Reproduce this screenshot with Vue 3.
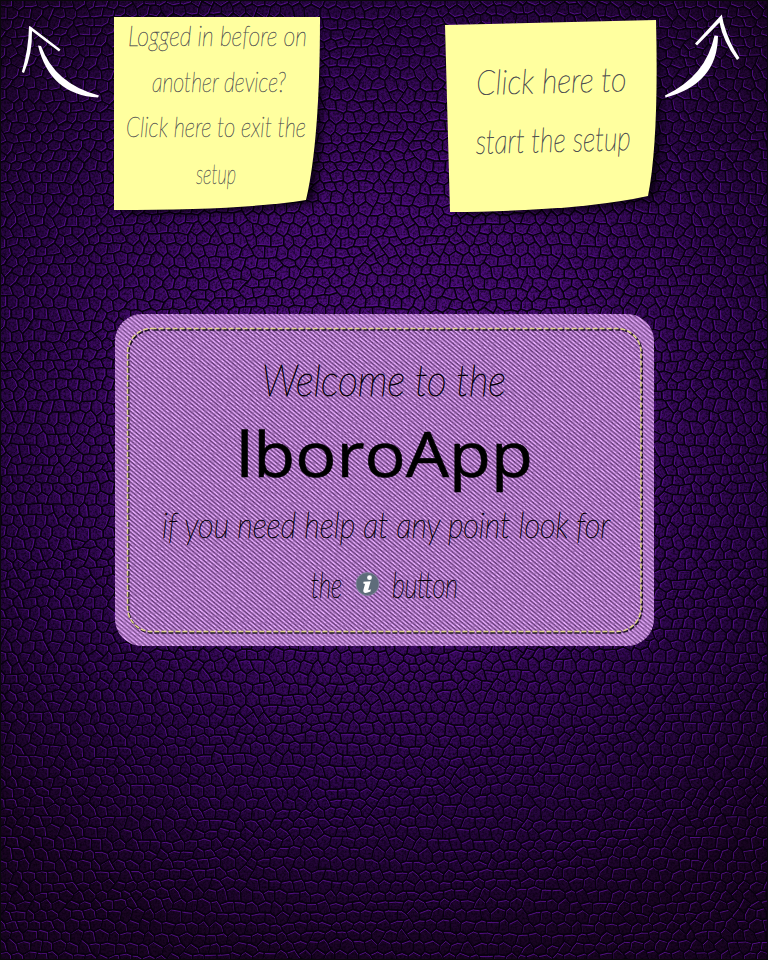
<script setup>
// Leather grain: a honeycomb whose shared corners are randomly displaced.
const W = 768
const H = 960
const hash = (a, b) => {
  const s = Math.sin(a * 127.1 + b * 311.7) * 43758.5453
  return s - Math.floor(s)
}
const cw = 12
const ch = 10.4
const corner = (i, j) => {
  const zig = (i + j) % 2 ? 1.5 : -1.5
  return [
    (i * cw) / 2 + (hash(i, j) - 0.5) * 4.4 - 6,
    j * ch + zig + (hash(i + 91, j + 37) - 0.5) * 4 + Math.sin(i * 0.11 + j * 0.6) * 2 - 4
  ]
}
const shift = ([x, y]) => {
  const dx = x - 384
  const dy = y - 420
  const d = Math.hypot(dx, dy) || 1
  return [x + (dx / d) * 1.6, y + (dy / d) * 1.6]
}
const f = ([x, y]) => x.toFixed(1) + ' ' + y.toFixed(1)
let seams = ''
let ridges = ''
for (let j = 0; j * ch < H + 20; j++) {
  for (let i = 0; (i * cw) / 2 < W + 20; i++) {
    const a = corner(i, j)
    const ends = [corner(i + 1, j)]
    if ((i + j) % 2) ends.push(corner(i, j + 1))
    for (const b of ends) {
      seams += 'M' + f(a) + 'L' + f(b)
      ridges += 'M' + f(shift(a)) + 'L' + f(shift(b))
    }
  }
}
</script>

<template>
  <div class="page">
    <svg class="leather" viewBox="0 0 768 960" aria-hidden="true">
      <defs>
        <radialGradient id="glow" gradientUnits="userSpaceOnUse" cx="384" cy="400" r="570">
          <stop offset="0" stop-color="#500e80" />
          <stop offset="0.35" stop-color="#460b72" />
          <stop offset="0.7" stop-color="#2b0648" />
          <stop offset="1" stop-color="#190422" />
        </radialGradient>
        <filter id="grain" x="0" y="0" width="100%" height="100%" color-interpolation-filters="sRGB">
          <feTurbulence type="fractalNoise" baseFrequency="0.45" numOctaves="2" seed="4" />
          <feColorMatrix values="0 0 0 0 0.02  0 0 0 0 0  0 0 0 0 0.04  1.6 0 0 0 -0.6" />
        </filter>
      </defs>
      <rect width="768" height="960" fill="url(#glow)" />
      <rect width="768" height="960" filter="url(#grain)" />
      <path :d="ridges" class="ridge" />
      <path :d="seams" class="seam" />
    </svg>

    <header class="top">
      <svg class="arrow-left" viewBox="0 0 110 230" aria-hidden="true">
        <path d="M29 26 L30.500 26.500 L60.500 49.500 L59 51.500 L32 31 Q32.500 54 24 73 L21.800 72 Q28.500 50 29 26Z" />
        <path d="M38 45.500 L41 46 Q55 84 99 95.500 L98 97.500 Q50 95 38 45.500Z" />
      </svg>

      <a class="note">
        <svg viewBox="110 0 220 230">
          <path class="shade" d="M122 30 H318 Q326 150 313 203 Q250 214 122 213Z" />
          <path class="paper" d="M114 17 H320 Q320 140 306 200 Q245 210 114 210Z" />
          <g class="ink small">
            <text x="128" y="46" textLength="179" lengthAdjust="spacingAndGlyphs">Logged in before on</text>
            <text x="152" y="92" textLength="134" lengthAdjust="spacingAndGlyphs">another device?</text>
            <text x="126" y="137" textLength="180" lengthAdjust="spacingAndGlyphs">Click here to exit the</text>
            <text x="196" y="184" textLength="40" lengthAdjust="spacingAndGlyphs">setup</text>
          </g>
        </svg>
      </a>

      <a class="note">
        <svg viewBox="440 0 220 230">
          <path class="shade" d="M456 32 L655 30 Q667 140 654 199 Q585 215 458 215Z" />
          <path class="paper" d="M445 25 L656 20 Q659 140 648 196 Q580 211 450 212Z" />
          <g class="ink large" transform="rotate(-1.400 550 110)">
            <text x="477" y="93" textLength="150" lengthAdjust="spacingAndGlyphs">Click here to</text>
            <text x="475" y="152" textLength="155" lengthAdjust="spacingAndGlyphs">start the setup</text>
          </g>
        </svg>
      </a>

      <svg class="arrow-right" viewBox="660 0 108 230" aria-hidden="true">
        <path d="M721.800 14.500 L723.500 23 Q729 43 739.500 58 L737 60 Q723 41 719.500 22.500 L697 45.500 L695 43.500Z" />
        <path d="M714.500 35.500 L718 36 Q717.500 84 665.500 97.500 L665 95.500 Q706 76 714.500 35.500Z" />
      </svg>
    </header>

    <main class="welcome">
      <svg viewBox="114 314 540 332">
        <defs>
          <pattern id="denim" width="3.200" height="3.200" patternUnits="userSpaceOnUse" patternTransform="rotate(40)">
            <rect width="3.200" height="3.200" fill="#e2a6f8" />
            <rect width="3.200" height="1.500" fill="#683c7c" />
          </pattern>
          <filter id="fibre" x="0" y="0" width="100%" height="100%" color-interpolation-filters="sRGB">
            <feTurbulence type="fractalNoise" baseFrequency="0.25 0.4" numOctaves="3" seed="8" />
            <feColorMatrix values="0 0 0 0 0.6  0 0 0 0 0.4  0 0 0 0 0.68  1.6 0 0 0 -0.6" />
          </filter>
          <clipPath id="patch"><rect x="115" y="314" width="539" height="332" rx="27" /></clipPath>
        </defs>
        <g clip-path="url(#patch)">
          <rect x="115" y="314" width="539" height="332" fill="url(#denim)" />
          <rect x="115" y="314" width="539" height="332" filter="url(#fibre)" />
          <rect class="rim" x="121" y="321" width="527" height="318" rx="24" />
        </g>
        <rect class="stitch-hole" x="128.500" y="329.700" width="513.500" height="303" rx="24" />
        <rect class="stitch" x="127.500" y="328.500" width="513.500" height="303" rx="24" />

        <text class="script hello" x="262" y="396" textLength="244" lengthAdjust="spacingAndGlyphs">Welcome to the</text>
        <text class="title" x="236" y="477" textLength="297" lengthAdjust="spacingAndGlyphs">lboroApp</text>
        <text class="script hint" x="162" y="538" textLength="448" lengthAdjust="spacingAndGlyphs">if you need help at any point look for</text>
        <text class="script hint" x="311" y="598" textLength="31" lengthAdjust="spacingAndGlyphs">the</text>
        <circle cx="367.500" cy="584" r="11.500" fill="#5e6c7a" stroke="#8a8aa5" stroke-width="0.800" />
        <g fill="#fff">
          <circle cx="369.500" cy="577.700" r="2.400" />
          <path d="M363.500 581.800 L370.700 581.200 L368.300 589.500 Q368.500 590.800 370.900 589.300 L370.500 591.500 Q363 595 363.300 590.300 L365 584 L363.300 583.500Z" />
        </g>
        <text class="script hint" x="392" y="598" textLength="66" lengthAdjust="spacingAndGlyphs">button</text>
      </svg>
    </main>
  </div>
</template>

<style>
body {
  background: #15041f;
}
</style>

<style scoped>
.page {
  position: relative;
  width: 768px;
  height: 960px;
  overflow: hidden;
}
.page::after {
  content: '';
  position: absolute;
  inset: 0;
  box-shadow: inset 0 0 0 1px #0a080c;
  pointer-events: none;
}
.leather {
  position: absolute;
  inset: 0;
  width: 768px;
  height: 960px;
}
.ridge {
  fill: none;
  stroke: #5a1294;
  stroke-width: 1;
  opacity: 0.85;
}
.seam {
  fill: none;
  stroke: #07010d;
  stroke-width: 1.5;
  stroke-linecap: round;
}
.top {
  position: relative;
  display: flex;
  height: 230px;
}
.top svg {
  display: block;
  height: 230px;
  overflow: visible;
}
.arrow-left {
  width: 110px;
  fill: #fff;
}
.arrow-right {
  width: 108px;
  fill: #fff;
}
.note {
  width: 220px;
}
.note svg {
  width: 220px;
}
.note + .note {
  margin-left: 110px;
}
.shade {
  fill: #000;
  opacity: 0.75;
  filter: blur(4px);
}
.paper {
  fill: #ffff9f;
}
.ink,
.script {
  font-family: Lato, 'Liberation Sans', sans-serif;
  font-style: italic;
  font-weight: 200;
}
.ink {
  fill: #4c4c50;
  stroke: #4c4c50;
  stroke-width: 0.4;
}
.small {
  font-size: 27px;
}
.large {
  font-size: 34px;
  stroke-width: 0.6;
}
.welcome {
  position: relative;
  display: flex;
  justify-content: center;
  padding-top: 84px;
}
.welcome svg {
  display: block;
  width: 540px;
  height: 332px;
  overflow: visible;
}
.rim {
  fill: none;
  stroke: #cf94e6;
  stroke-width: 13;
  opacity: 0.2;
}
.stitch,
.stitch-hole {
  fill: none;
  stroke-dasharray: 5 2;
}
.stitch {
  stroke: #e0d288;
  stroke-width: 1.5;
}
.stitch-hole {
  stroke: #21162b;
  stroke-width: 2;
  stroke-dashoffset: -1;
}
.script {
  fill: #050208;
  stroke: #050208;
  stroke-width: 0.6;
}
.hello {
  font-size: 45px;
  stroke-width: 0.8;
}
.hint {
  font-size: 35px;
}
.title {
  font-family: 'Open Sans', 'Noto Sans', sans-serif;
  font-size: 62px;
  font-weight: 500;
  fill: #000;
  stroke: #000;
  stroke-width: 0.6;
}
</style>
